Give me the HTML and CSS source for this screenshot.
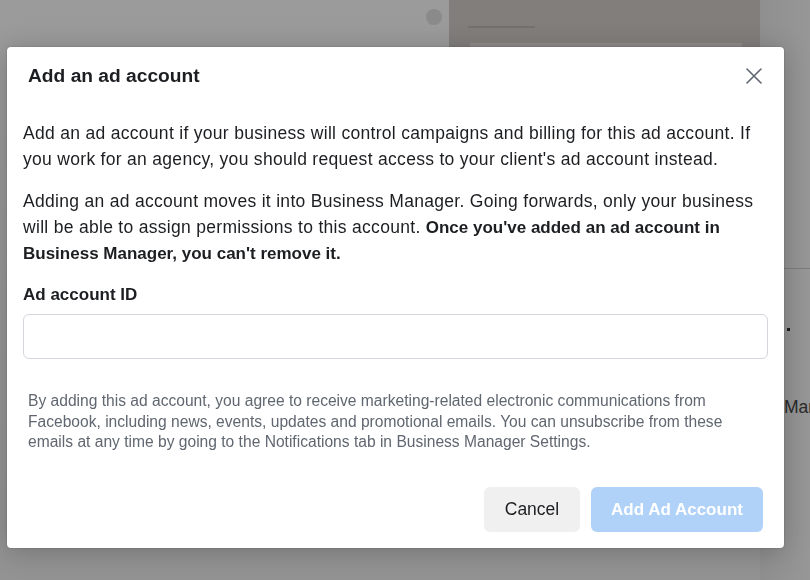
FILE: index.html
```html
<!DOCTYPE html>
<html lang="en">
<head>
<meta charset="utf-8">
<title>Add an ad account</title>
<link rel="stylesheet" href="styles.css">
</head>
<body>
<div class="page">
  <div class="bg-avatar"></div>
  <div class="bg-card">
    <div class="bg-line"></div>
    <div class="bg-inner"></div>
  </div>
  <div class="bg-side">
    <div class="bg-rule"></div>
    <div class="bg-dot"></div>
    <div class="bg-text">Mar</div>
  </div>
</div>
<div class="overlay">
  <div class="modal" role="dialog" aria-labelledby="modal-title">
    <div class="modal-header">
      <h2 class="modal-title" id="modal-title">Add an ad account</h2>
      <button class="close-btn" aria-label="Close">
        <svg width="16" height="16" viewBox="0 0 16 16"><path d="M1 1L15 15M15 1L1 15" stroke="#606770" stroke-width="1.6" stroke-linecap="round" fill="none"/></svg>
      </button>
    </div>
    <div class="modal-body">
      <p class="para">Add an ad account if your business will control campaigns and billing for this ad account. If you work for an agency, you should request access to your client's ad account instead.</p>
      <p class="para">Adding an ad account moves it into Business Manager. Going forwards, only your business will be able to assign permissions to this account. <strong>Once you've added an ad account in Business Manager, you can't remove it.</strong></p>
      <label class="field-label" for="ad-id">Ad account ID</label>
      <input class="field-input" id="ad-id" type="text">
      <p class="legal">By adding this ad account, you agree to receive marketing-related electronic communications from Facebook, including news, events, updates and promotional emails. You can unsubscribe from these emails at any time by going to the Notifications tab in Business Manager Settings.</p>
    </div>
    <div class="modal-footer">
      <button class="btn btn-cancel">Cancel</button>
      <button class="btn btn-primary" disabled>Add Ad Account</button>
    </div>
  </div>
</div>
</body>
</html>
```

FILE: styles.css
```css
* { box-sizing: border-box; }

html, body {
  margin: 0;
  padding: 0;
  width: 810px;
  height: 580px;
  overflow: hidden;
}

body {
  background: #959595;
  font-family: "Liberation Sans", Arial, Helvetica, sans-serif;
  color: #1c1e21;
}

.page {
  position: relative;
  width: 810px;
  height: 580px;
  background: linear-gradient(to bottom, #9b9b9b 0, #939393 100%);
}

.bg-avatar {
  position: absolute;
  left: 426px;
  top: 9px;
  width: 16px;
  height: 16px;
  border-radius: 50%;
  background: #8a8a8a;
}

.bg-card {
  position: absolute;
  left: 449px;
  top: 0;
  width: 311px;
  height: 80px;
  background: #817e7b;
}

.bg-line {
  position: absolute;
  left: 19px;
  top: 26px;
  width: 67px;
  height: 2px;
  background: #75716d;
}

.bg-inner {
  position: absolute;
  left: 21px;
  top: 43px;
  width: 272px;
  height: 40px;
  background: #8c8a87;
  border-top: 1px solid #908e8b;
}

.bg-side {
  position: absolute;
  left: 760px;
  top: 0;
  width: 50px;
  height: 580px;
  background: linear-gradient(to right, #8f8f8f, #979797);
}

.bg-rule {
  position: absolute;
  left: 0;
  top: 268px;
  width: 50px;
  height: 1px;
  background: #7c7c7c;
}

.bg-dot {
  position: absolute;
  left: 27px;
  top: 328px;
  width: 3px;
  height: 3px;
  background: #1e1e1e;
}

.bg-text {
  position: absolute;
  left: 24px;
  top: 397px;
  font-size: 17.5px;
  white-space: nowrap;
  color: #2a2a2a;
}

.overlay {
  position: fixed;
  inset: 0;
  padding: 47px 0 0 7px;
}

.modal {
  width: 777px;
  height: 501px;
  background: #fff;
  border-radius: 4px;
  box-shadow: 0 4px 28px rgba(0, 0, 0, 0.22), 0 0 2px rgba(0, 0, 0, 0.25);
  display: flex;
  flex-direction: column;
}

.modal-header {
  display: flex;
  align-items: flex-start;
  justify-content: space-between;
  padding: 17px 22px 0 21px;
  height: 73px;
}

.modal-title {
  margin: 0;
  font-size: 19.2px;
  line-height: 24px;
  font-weight: bold;
  color: #1c1e21;
}

.close-btn {
  border: 0;
  background: none;
  padding: 0;
  margin-top: 4px;
  width: 16px;
  height: 16px;
  display: flex;
  cursor: pointer;
}

.modal-body {
  padding: 0 16px;
  display: flex;
  flex-direction: column;
}

.para {
  margin: 0 0 16px;
  font-size: 17.5px;
  letter-spacing: 0.3px;
  line-height: 26px;
  color: #1c1e21;
}

.para strong {
  font-weight: bold;
  font-size: 17px;
  line-height: 1;
  letter-spacing: 0;
}

.field-label {
  font-size: 17px;
  line-height: 26px;
  font-weight: bold;
  color: #1c1e21;
  margin-bottom: 6px;
}

.field-input {
  height: 45px;
  width: 100%;
  border: 1px solid #d3d6db;
  border-radius: 6px;
  font-size: 17px;
  padding: 0 12px;
  outline: none;
}

.legal {
  margin: 32px 0 0;
  padding: 0 5px;
  font-size: 15.6px;
  line-height: 20.5px;
  color: #606770;
}

.modal-footer {
  margin-top: auto;
  display: flex;
  justify-content: flex-end;
  gap: 11px;
  padding: 0 21px 16px;
}

.btn {
  height: 45px;
  border: 0;
  border-radius: 6px;
  font-family: inherit;
  font-size: 17.5px;
  padding: 0;
}

.btn-cancel {
  width: 96px;
  background: #f0f0f0;
  color: #1c1e21;
}

.btn-primary {
  width: 172px;
  background: #b1d2f8;
  color: #fff;
  font-size: 17px;
  font-weight: bold;
}
```
